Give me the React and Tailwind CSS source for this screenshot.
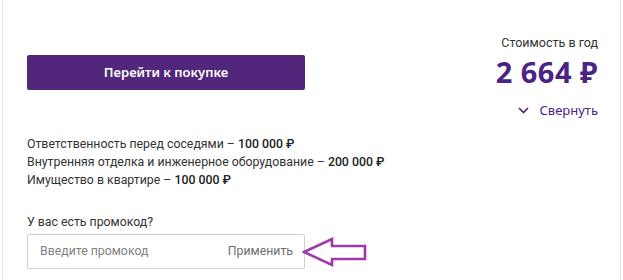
export default function App() {
  return (
    <div className="w-[623px] h-[280px] bg-white overflow-hidden" style={{ fontFamily: "Roboto, 'Liberation Sans', sans-serif" }}>
      <div className="ml-[2px] w-[619px] h-[280px] border-x border-[#e4e4e4] pl-[24px] pr-[22px]">
        <div className="flex justify-between pt-[35px]">
          <div className="pt-[20px]">
            <button className="w-[278px] h-[35px] rounded-[2px] bg-[#52277b] text-white text-[13px] font-semibold flex items-center justify-center" style={{ fontFamily: "'Noto Sans', sans-serif" }}>
              Перейти к покупке
            </button>
          </div>
          <div className="flex flex-col items-end">
            <div className="text-[12.5px] leading-[16px] text-[#333]">Стоимость в год</div>
            <div className="mt-[5px] text-[29px] leading-[32px] font-bold text-[#4b2384] tracking-[0.5px]" style={{ fontFamily: "'Noto Sans', sans-serif" }}>2 664 ₽</div>
            <div className="mt-[14px] flex items-center gap-[11px] text-[13px] leading-[16px] text-[#4b2384]" style={{ fontFamily: "'Noto Sans', sans-serif" }}>
              <svg width="11" height="7" viewBox="0 0 11 7" fill="none">
                <path d="M1 1l4.5 4.5L10 1" stroke="#4b2384" strokeWidth="1.6" />
              </svg>
              <span>Свернуть</span>
            </div>
          </div>
        </div>
        <div className="mt-[17px] text-[12.3px] leading-[18px] text-[#333]">
          <div>Ответственность перед соседями – <span className="font-medium text-[#222]">100 000 ₽</span></div>
          <div>Внутренняя отделка и инженерное оборудование – <span className="font-medium text-[#222]">200 000 ₽</span></div>
          <div>Имущество в квартире – <span className="font-medium text-[#222]">100 000 ₽</span></div>
        </div>
        <div className="mt-[25px] text-[12.3px] leading-[16px] text-[#333]">У вас есть промокод?</div>
        <div className="mt-[4px] flex items-center">
          <div className="w-[278px] h-[35px] border border-[#cfcfcf] rounded-[2px] flex items-center justify-between pl-[12px] pr-[11px] text-[12.3px]">
            <span className="text-[#808080]">Введите промокод</span>
            <span className="text-[#6f6f6f]">Применить</span>
          </div>
          <svg width="70" height="32" viewBox="0 0 70 32" className="-ml-[3px]" fill="none">
            <path d="M2 16 L30 3 L30 10 L63 10 L63 23 L30 23 L30 29 Z" stroke="#a03aa8" strokeWidth="2.6" strokeLinejoin="miter" />
          </svg>
        </div>
      </div>
    </div>
  );
}
